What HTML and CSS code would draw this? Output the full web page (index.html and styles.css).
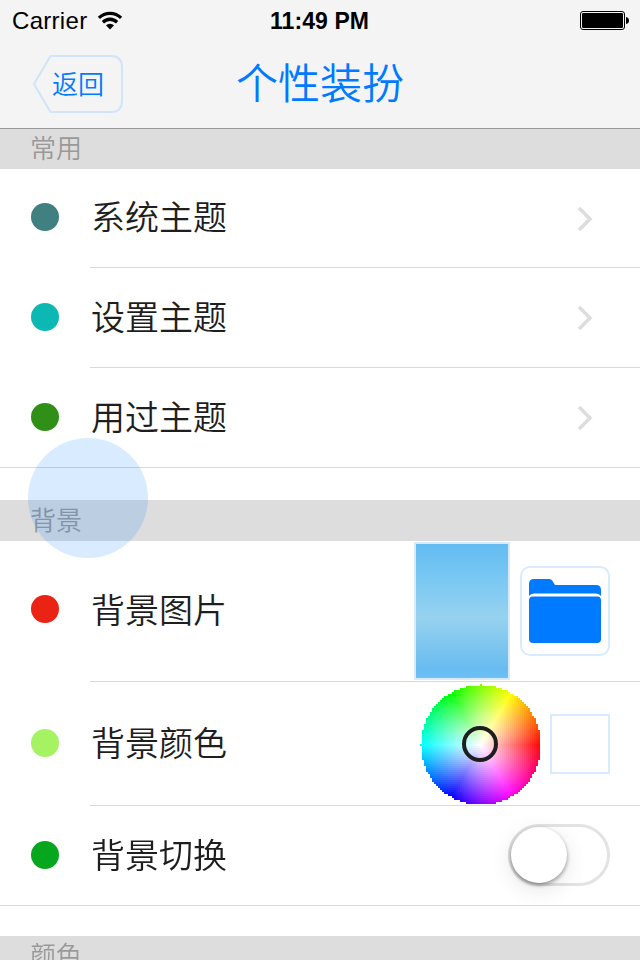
FILE: index.html
```html
<!DOCTYPE html>
<html lang="zh-CN">
<head>
    <meta charset="UTF-8">
    <title>个性装扮</title>
    <link rel="stylesheet" href="styles.css">
</head>
<body>
    <header>
        <div class="status">
            <div class="carrier">
                <span>Carrier</span>
                <svg class="wifi" width="26" height="19" viewBox="0 0 26 19">
                    <path d="M0.8 5.8 A17 17 0 0 1 25.2 5.8 L23 8.1 A14 14 0 0 0 3 8.1 Z"/>
                    <path d="M4.8 10.1 A11.3 11.3 0 0 1 21.2 10.1 L19 12.4 A8.4 8.4 0 0 0 7 12.4 Z"/>
                    <path d="M9 14.3 A5.8 5.8 0 0 1 17 14.3 L13 18.4 Z"/>
                </svg>
            </div>
            <span class="time">11:49 PM</span>
            <svg class="battery" width="50" height="20" viewBox="0 0 50 20">
                <rect x="0.5" y="0.5" width="44" height="18" rx="2.5" fill="none" stroke="#000"/>
                <rect x="2" y="2" width="41" height="15" rx="1.2"/>
                <path d="M46 6 Q49 6.5 49 9.5 Q49 12.5 46 13 Z"/>
            </svg>
        </div>
        <div class="nav">
            <button class="back" type="button">
                <svg class="back-shape" width="92" height="60" viewBox="0 0 92 60">
                    <path d="M18.5 2 H79 Q90 2 90 13 V47 Q90 58 79 58 H18.5 L2 30 Z"/>
                </svg>
                <span class="back-label">返回</span>
            </button>
            <h1>个性装扮</h1>
        </div>
    </header>

    <h2 class="first">常用</h2>
    <ul>
        <li class="row theme">
            <i class="dot teal"></i>
            <div class="cell">
                <span class="label">系统主题</span>
                <svg class="arrow" width="18" height="28" viewBox="0 0 18 28"><path d="M3 3 L14 14 L3 25"/></svg>
            </div>
        </li>
        <li class="row theme">
            <i class="dot cyan"></i>
            <div class="cell">
                <span class="label">设置主题</span>
                <svg class="arrow" width="18" height="28" viewBox="0 0 18 28"><path d="M3 3 L14 14 L3 25"/></svg>
            </div>
        </li>
        <li class="row theme">
            <i class="dot green"></i>
            <div class="cell">
                <span class="label">用过主题</span>
                <svg class="arrow" width="18" height="28" viewBox="0 0 18 28"><path d="M3 3 L14 14 L3 25"/></svg>
            </div>
        </li>
    </ul>

    <h2>背景</h2>
    <ul>
        <li class="row image">
            <i class="dot red"></i>
            <div class="cell">
                <span class="label">背景图片</span>
                <div class="thumb"></div>
                <button class="folder" type="button">
                    <svg width="72" height="64" viewBox="0 0 72 64">
                        <path d="M0 5 Q0 0 5 0 H20 Q22.500 0 23.500 2 L26 6 H67 Q72 6 72 11 V17 Q70.500 14.500 67 14.500 H5 Q1.500 14.500 0 17 Z"/>
                        <rect y="17.500" width="72" height="46.500" rx="4"/>
                    </svg>
                </button>
            </div>
        </li>
        <li class="row color">
            <i class="dot lime"></i>
            <div class="cell">
                <span class="label">背景颜色</span>
                <div class="picker">
                    <canvas id="wheel" width="60" height="60"></canvas>
                    <div class="ring"></div>
                </div>
                <div class="swatch"></div>
            </div>
        </li>
        <li class="row toggle">
            <i class="dot emerald"></i>
            <div class="cell">
                <span class="label">背景切换</span>
                <div class="switch"><div class="knob"></div></div>
            </div>
        </li>
    </ul>

    <h2 class="last">颜色</h2>
    <div class="touch"></div>

    <script>
        // hue follows the angle, saturation follows the distance from the centre
        const ctx = document.getElementById("wheel").getContext("2d");
        const r = 30;
        for (let y = 0; y < 60; y++) {
            for (let x = 0; x < 60; x++) {
                const dx = x - r, dy = r - y;
                const d = Math.sqrt(dx * dx + dy * dy);
                if (d > r) continue;
                const hue = (Math.atan2(dy, dx) * 180 / Math.PI + 360) % 360;
                ctx.fillStyle = `hsl(${hue}, 100%, ${100 - 50 * d / r}%)`;
                ctx.fillRect(x, y, 1, 1);
            }
        }
    </script>
</body>
</html>
```
FILE: styles.css
```css
* { box-sizing: border-box; }
body { margin: 0; width: 640px; height: 960px; overflow: hidden; position: relative; background: #fff; color: #1e1e1e; font-family: "Noto Sans CJK SC", sans-serif; font-weight: 350; }
button { padding: 0; background: none; font: inherit; }
h1, h2, ul { margin: 0; padding: 0; font-weight: 350; }
ul { list-style: none; }

header { height: 129px; background: #f4f4f4; border-bottom: 1px solid #999; }
.status { display: grid; grid-template-columns: 1fr auto 1fr; align-items: center; height: 40px; padding: 1px 10px 0 12px; font: 24px/38px "Liberation Sans", Arial, sans-serif; color: #000; }
.carrier { display: flex; align-items: center; gap: 10px; letter-spacing: .3px; }
.time { font-weight: bold; font-size: 23px; letter-spacing: .1px; margin-right: 3px; }
.battery { justify-self: end; }

.nav { display: grid; grid-template-columns: 1fr auto 1fr; align-items: center; height: 88px; color: #007aff; }
.nav h1 { font-size: 42px; line-height: 60px; padding-bottom: 6px; }
.back { display: grid; width: 92px; height: 60px; margin-left: 32px; border: none; color: #007aff; font-size: 26px; line-height: 58px; }
.back-shape, .back-label { grid-area: 1 / 1; }
.back-shape path { fill: none; stroke: #d0e4fa; stroke-width: 2; }

h2 { height: 41px; padding-left: 30px; background: #ddd; color: #999; font-size: 26px; line-height: 37px; }
h2.first { height: 40px; line-height: 35px; }
h2.last { line-height: 35px; }

ul { border-bottom: 1px solid #d9d9d9; margin-bottom: 32px; }
ul + h2 + ul { margin-bottom: 30px; }
.row { display: flex; align-items: center; padding-left: 31px; }
.dot { width: 28px; height: 28px; margin-right: 31px; border-radius: 50%; }
.cell { flex: 1; display: flex; align-items: center; height: 100%; padding-right: 30px; border-bottom: 1px solid #d9d9d9; }
.row:last-child .cell { border-bottom: none; }
.label { flex: 1; padding: 0 0 4px 1px; font-size: 34px; line-height: 50px; }
.theme { height: 100px; }
.theme:first-child { height: 99px; }
.theme:last-child, .toggle { height: 99px; }
.theme .dot { margin-bottom: 2px; }
.theme:first-child .dot { margin-bottom: 3px; }
.image { height: 141px; }
.image .dot { margin-bottom: 5px; }
.color { height: 124px; }
.color .dot, .toggle .dot { margin-bottom: 2px; }

.teal { background: #408080; }
.cyan { background: #0cb8b4; }
.green { background: #2f8f16; }
.red { background: #ea2314; }
.lime { background: #a5f263; }
.emerald { background: #06a71f; }

.arrow { margin: 1px 16px 0 0; }
.arrow path { fill: none; stroke: #ddd; stroke-width: 3.6; }

.thumb { width: 96px; height: 138px; border: 2px solid #d9eaff; background: linear-gradient(#63bcf0, #76c6f3 22%, #97d2ef 55%, #67bbf1 94%, #6cc3f4); }
.folder { display: grid; place-items: center; width: 90px; height: 90px; margin-left: 10px; border: 2px solid #d9eaff; border-radius: 10px; fill: #007aff; }

.picker { display: grid; place-items: center; width: 120px; height: 120px; margin-top: 1px; }
.picker canvas { grid-area: 1 / 1; width: 120px; height: 120px; image-rendering: pixelated; }
.ring { grid-area: 1 / 1; z-index: 1; width: 36px; height: 36px; border: 4px solid #1e1e1e; border-radius: 50%; }
.swatch { width: 60px; height: 60px; margin-left: 10px; border: 2px solid #d9eaff; }

.switch { width: 102px; height: 62px; margin-bottom: 2px; border: 3px solid #e3e3e3; border-radius: 31px; }
.knob { width: 56px; height: 56px; border-radius: 50%; background: #fff; box-shadow: 0 2px 4px rgba(0, 0, 0, .4), 0 6px 22px rgba(0, 0, 0, .11); }

/* touch indicator over the list */
.touch { position: absolute; left: 28px; top: 438px; width: 120px; height: 120px; border-radius: 50%; background: rgba(0, 122, 255, .15); }
```
